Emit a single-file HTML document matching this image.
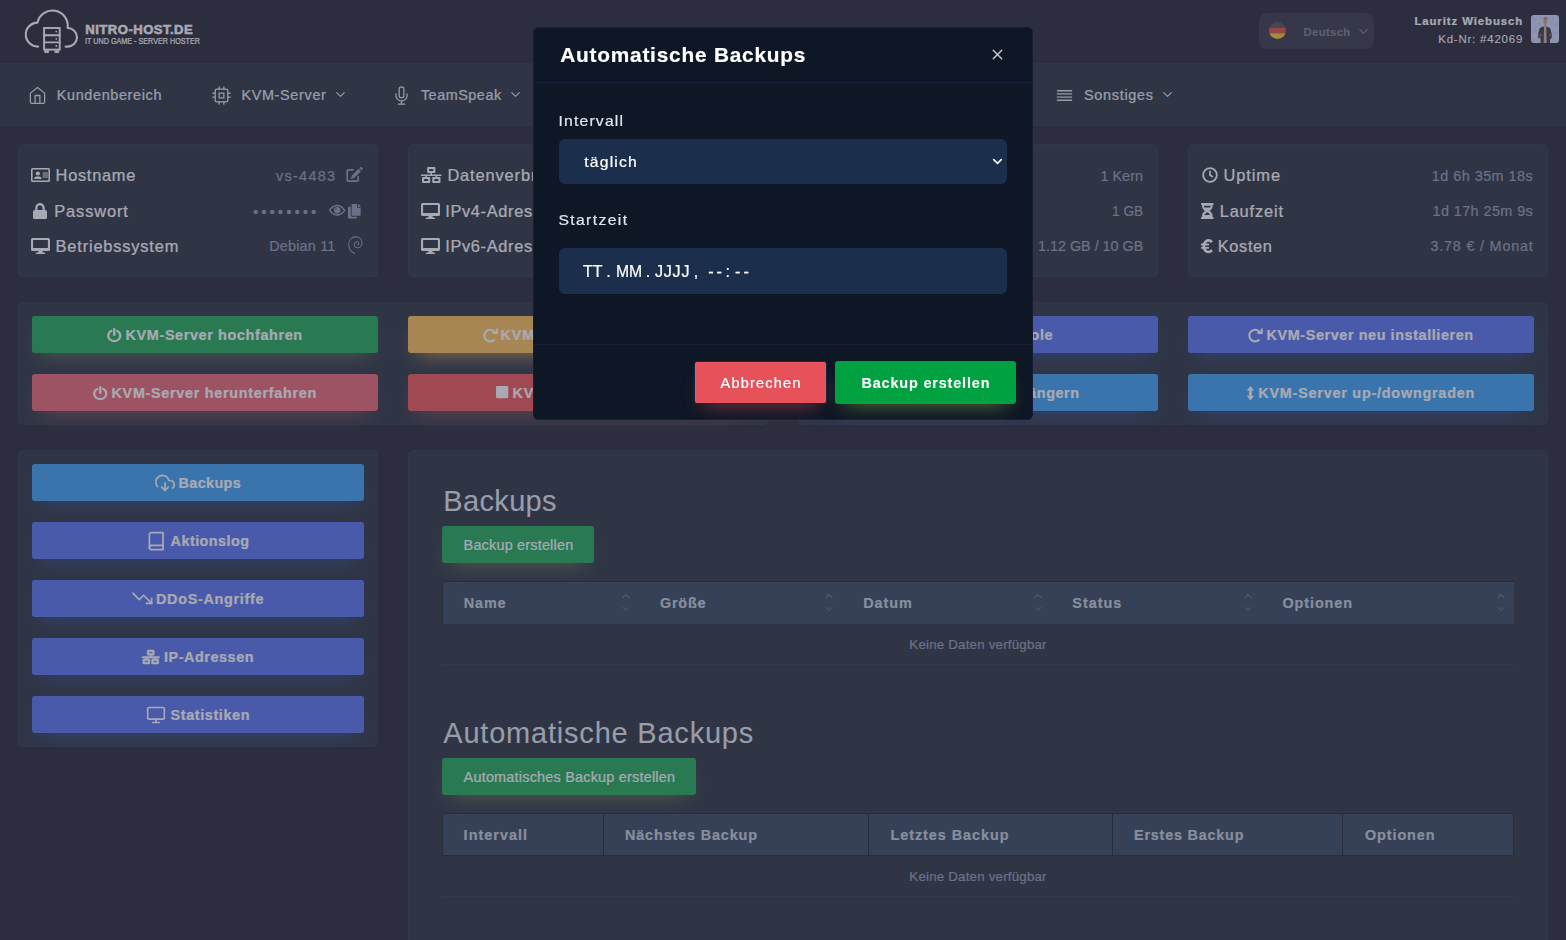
<!DOCTYPE html>
<html lang="de">
<head>
<meta charset="utf-8">
<title>Nitro-Host.de - KVM-Server</title>
<style>
*{box-sizing:border-box}
html,body{margin:0;padding:0}
body{width:1566px;height:940px;overflow:hidden;position:relative;background:#060818;font-family:"Liberation Sans",sans-serif;color:#fff}
.page{position:absolute;left:0;top:0;width:1566px;height:940px;overflow:hidden}
.t{position:absolute;white-space:pre;line-height:20px;margin:0;font-weight:400;transform-origin:0 50%;-webkit-text-stroke:.2px currentColor}
.i{position:absolute;display:block;overflow:visible}
.box{position:absolute}
header{position:absolute;left:0;top:0;width:1566px;height:63px;background:#060818}
nav{position:absolute;left:0;top:63px;width:1566px;height:63px;background:#0e1726}
.card{position:absolute;background:#0e1726;border-radius:6px;box-shadow:inset 0 0 0 1px #121c30}
.btn{position:absolute;border-radius:3px;height:37px}
.b-success{background:#00a141;box-shadow:0 10px 20px -10px rgba(141,191,66,.59)}
.b-danger{background:#ed3f41;box-shadow:0 10px 20px -10px rgba(231,81,90,.59)}
.b-danger2{background:#e95361;box-shadow:0 10px 20px -10px rgba(231,81,90,.59)}
.b-warning{background:#fdb941;box-shadow:0 10px 20px -10px rgba(235,170,63,.95)}
.b-primary{background:#4361ee;box-shadow:0 10px 20px -10px rgba(27,85,226,.59)}
.b-mdanger{background:#e7515a}
.b-info{background:#2196f3;box-shadow:0 10px 20px -10px rgba(27,85,226,.59)}
.th{position:absolute;background:#1b2e4b}
.backdrop{position:absolute;left:0;top:0;width:1566px;height:940px;background:#515365;opacity:.5}
.modal{position:absolute;left:533px;top:27px;width:500px;height:393px;background:#0e1726;border-radius:6px;box-shadow:inset 0 0 0 1px #171c38;will-change:transform}
.modal .t{-webkit-text-stroke:.22px currentColor}
.line{position:absolute;height:1px}
.field{position:absolute;background:#1b2e4b;border-radius:6px}
</style>
</head>
<body>
<div class="page">
<header>
<svg class="i" style="left:20px;top:5px;width:64px;height:54px;color:#fff" viewBox="20 5 64 54" fill="none" stroke="currentColor" stroke-width="2.1" stroke-linecap="round" stroke-linejoin="round">
<path d="M38.1 46.6 A12 12 0 0 1 37.5 22.6 A15.3 15.3 0 0 1 67.6 28 A9.3 9.3 0 0 1 67.800 46.6 H65.6"/>
<rect x="44.1" y="28" width="15.6" height="21.6" stroke-width="1.9" stroke-linejoin="miter"/>
<line x1="44.1" y1="35.2" x2="59.7" y2="35.2" stroke-width="1.9"/><line x1="44.1" y1="42.4" x2="59.7" y2="42.4" stroke-width="1.9"/>
<rect x="45" y="50.6" width="3.6" height="2" fill="currentColor" stroke-width=".8"/><rect x="55.2" y="50.6" width="3.6" height="2" fill="currentColor" stroke-width=".8"/>
<circle cx="56.3" cy="31.6" r=".9" fill="currentColor" stroke="none"/><circle cx="56.3" cy="38.800" r=".9" fill="currentColor" stroke="none"/><circle cx="56.3" cy="46" r=".9" fill="currentColor" stroke="none"/>
</svg>
<span class="t" style="top:19.7px;font-size:13.1px;left:85.3px;letter-spacing:0.47px;font-weight:700;color:#fff;-webkit-text-stroke:.5px #fff;">NITRO-HOST.DE</span>
<span class="t" style="top:31.3px;font-size:8.6px;left:85px;color:#fff;transform:scaleX(0.8382);">IT UND GAME - SERVER HOSTER</span>
<div class="box" style="left:1259px;top:13px;width:115px;height:36px;border-radius:8px;background:#1a1c2d"></div>
<svg class="i" style="left:1269px;top:22px;width:17px;height:17px" viewBox="0 0 17 17"><defs><clipPath id="fc"><circle cx="8.5" cy="8.5" r="8.5"/></clipPath></defs><g clip-path="url(#fc)"><rect width="17" height="5.7" fill="#3a3a3a"/><rect y="5.7" width="17" height="5.6" fill="#e0332e"/><rect y="11.3" width="17" height="5.7" fill="#f5c518"/></g></svg>
<span class="t" style="top:22.2px;font-size:11.4px;left:1303.5px;letter-spacing:0.31px;font-weight:700;color:#6b6d85;-webkit-text-stroke:0;">Deutsch</span>
<svg class="i" style="left:1356px;top:24px;width:15px;height:15px;color:#6b6d85;" viewBox="0 0 24 24" fill="none" stroke="currentColor" stroke-width="1.8" stroke-linecap="round" stroke-linejoin="round"><polyline points="6 9 12 15 18 9"/></svg>
<span class="t" style="top:11px;font-size:11.4px;left:1414.4px;letter-spacing:0.91px;font-weight:700;color:#fff;">Lauritz Wiebusch</span>
<span class="t" style="top:29.3px;font-size:11.5px;left:1438.2px;letter-spacing:0.78px;color:#fff;-webkit-text-stroke:.05px currentColor;">Kd-Nr: #42069</span>
<svg class="i" style="left:1531px;top:15px;width:28px;height:28px;border-radius:3px;overflow:hidden" viewBox="0 0 28 28"><rect width="28" height="28" fill="#c8d6fa"/><g fill="#aebde4" opacity=".55"><circle cx="3" cy="4" r="1.6"/><circle cx="8" cy="9" r="1.3"/><circle cx="4" cy="15" r="1.7"/><circle cx="7" cy="22" r="1.5"/><circle cx="22" cy="3" r="1.5"/><circle cx="25" cy="10" r="1.6"/><circle cx="21" cy="8" r="1.1"/><circle cx="24" cy="18" r="1.6"/><circle cx="22" cy="25" r="1.4"/><circle cx="10" cy="3" r="1.2"/><circle cx="18" cy="2.5" r="1.1"/><circle cx="2.5" cy="25" r="1.4"/></g><g fill="#e4ecff" opacity=".5"><circle cx="5.5" cy="7" r="1"/><circle cx="24" cy="6" r="1"/><circle cx="3" cy="20" r="1.1"/><circle cx="25.5" cy="22" r="1"/><circle cx="9.5" cy="14" r=".9"/><circle cx="20.5" cy="13" r=".9"/></g><path d="M9.6 28V23.2L7.4 23 7.2 19 8.600 13.400Q10.800 11.800 12.800 11.600L16 11.800Q18.700 12.400 19.600 14L20.900 21 20.400 23.400 19 24 19 28z" fill="#271d1b"/><path d="M13 11.800h2.200l.5 16.200h-3z" fill="#b9a9ab"/><path d="M7.400 19.500l3.600-1 .3 2.200-3.700 1.500zM20.800 18l-2.800 1.200.2 2.400 2.900-1z" fill="#6a4a48"/><ellipse cx="14.300" cy="6.300" rx="1.900" ry="2.700" fill="#d88a78"/><ellipse cx="14.500" cy="3.500" rx="2.100" ry="1.400" fill="#d2702c"/><rect x="13.400" y="8.400" width="1.800" height="3.400" fill="#cf8878"/></svg>
</header>
<nav>
<svg class="i" style="left:27.9px;top:22.9px;width:19px;height:19px;color:#e0e6ed;" viewBox="0 0 24 24" fill="none" stroke="currentColor" stroke-width="1.6" stroke-linecap="round" stroke-linejoin="round"><path d="M3 9l9-7 9 7v11a2 2 0 0 1-2 2H5a2 2 0 0 1-2-2z"/><polyline points="9 22 9 12 15 12 15 22"/></svg><span class="t" style="top:22px;font-size:14.4px;left:56.8px;letter-spacing:0.65px;color:#e0e6ed;">Kundenbereich</span>
<svg class="i" style="left:212.1px;top:22.9px;width:19px;height:19px;color:#e0e6ed;" viewBox="0 0 24 24" fill="none" stroke="currentColor" stroke-width="1.6" stroke-linecap="round" stroke-linejoin="round"><rect x="4" y="4" width="16" height="16" rx="2" ry="2"/><rect x="9" y="9" width="6" height="6"/><line x1="9" y1="1" x2="9" y2="4"/><line x1="15" y1="1" x2="15" y2="4"/><line x1="9" y1="20" x2="9" y2="23"/><line x1="15" y1="20" x2="15" y2="23"/><line x1="20" y1="9" x2="23" y2="9"/><line x1="20" y1="14" x2="23" y2="14"/><line x1="1" y1="9" x2="4" y2="9"/><line x1="1" y1="14" x2="4" y2="14"/></svg><span class="t" style="top:22px;font-size:14.4px;left:241.4px;letter-spacing:0.68px;color:#e0e6ed;">KVM-Server</span><svg class="i" style="left:332.9px;top:23.8px;width:15px;height:15px;color:#e0e6ed;" viewBox="0 0 24 24" fill="none" stroke="currentColor" stroke-width="1.8" stroke-linecap="round" stroke-linejoin="round"><polyline points="6 9 12 15 18 9"/></svg>
<svg class="i" style="left:392px;top:22.9px;width:19px;height:19px;color:#e0e6ed;" viewBox="0 0 24 24" fill="none" stroke="currentColor" stroke-width="1.6" stroke-linecap="round" stroke-linejoin="round"><path d="M12 1a3 3 0 0 0-3 3v8a3 3 0 0 0 6 0V4a3 3 0 0 0-3-3z"/><path d="M19 10v2a7 7 0 0 1-14 0v-2"/><line x1="12" y1="19" x2="12" y2="23"/><line x1="8" y1="23" x2="16" y2="23"/></svg><span class="t" style="top:22px;font-size:14.4px;left:420.9px;letter-spacing:0.53px;color:#e0e6ed;">TeamSpeak</span><svg class="i" style="left:508px;top:23.8px;width:15px;height:15px;color:#e0e6ed;" viewBox="0 0 24 24" fill="none" stroke="currentColor" stroke-width="1.8" stroke-linecap="round" stroke-linejoin="round"><polyline points="6 9 12 15 18 9"/></svg>
<svg class="i" style="left:1055px;top:22.9px;width:19px;height:19px;color:#e0e6ed;" viewBox="0 0 24 24" fill="none" stroke="currentColor" stroke-width="1.6" stroke-linecap="round" stroke-linejoin="round"><line x1="21" y1="10" x2="3" y2="10"/><line x1="21" y1="6" x2="3" y2="6"/><line x1="21" y1="14" x2="3" y2="14"/><line x1="21" y1="18" x2="3" y2="18"/></svg><span class="t" style="top:22px;font-size:14.4px;left:1084px;letter-spacing:0.72px;color:#e0e6ed;">Sonstiges</span><svg class="i" style="left:1160px;top:23.8px;width:15px;height:15px;color:#e0e6ed;" viewBox="0 0 24 24" fill="none" stroke="currentColor" stroke-width="1.8" stroke-linecap="round" stroke-linejoin="round"><polyline points="6 9 12 15 18 9"/></svg>
</nav>
<section class="card" style="left:18px;top:144px;width:360px;height:133px">
<svg class="i" style="left:13px;top:23px;width:19px;height:16px;color:#ffffff;" viewBox="0 0 576 512" preserveAspectRatio="none" fill="currentColor"><path fill-rule="evenodd" d="M48 32h480a48 48 0 0 1 48 48v352a48 48 0 0 1-48 48H48a48 48 0 0 1-48-48V80a48 48 0 0 1 48-48zm0 48v352h480V80z"/><circle cx="208" cy="208" r="64"/><path d="M96 384c0-52 28-84 68-84h88c40 0 68 32 68 84z"/><rect x="352" y="176" width="160" height="32" rx="8"/><rect x="352" y="240" width="160" height="32" rx="8"/><rect x="352" y="304" width="160" height="32" rx="8"/></svg>
<span class="t" style="top:21.3px;font-size:16.4px;left:37.6px;letter-spacing:0.71px;color:#ffffff;">Hostname</span>
<span class="t" style="top:22px;font-size:14.4px;left:258px;letter-spacing:1.3px;color:#888ea8;">vs-4483</span>
<svg class="i" style="left:328px;top:23px;width:17px;height:16px;color:#888ea8;" viewBox="0 0 17 16" fill="currentColor"><path fill="none" stroke="currentColor" stroke-width="1.7" stroke-linejoin="round" d="M7.6 2.9H2.6A1.4 1.4 0 0 0 1.2 4.3V12.8A1.4 1.4 0 0 0 2.6 14.2H10.8A1.4 1.4 0 0 0 12.2 12.8V9.2"/><path d="M4.8 11.9L5.6 8.7L12.6 1.8L15 4.2L8 11.1zM13.3 1.1L14.1 .3A1 1 0 0 1 15.5 .3L16.5 1.3A1 1 0 0 1 16.5 2.7L15.7 3.5z"/></svg>
<svg class="i" style="left:14.7px;top:59px;width:14px;height:16px;color:#ffffff;" viewBox="0 0 448 512" fill="currentColor"><path d="M48 224h352a48 48 0 0 1 48 48v192a48 48 0 0 1-48 48H48a48 48 0 0 1-48-48V272a48 48 0 0 1 48-48z"/><path d="M72 232v-80a152 152 0 0 1 304 0v80h-72v-80a80 80 0 0 0-160 0v80z"/></svg>
<span class="t" style="top:57.3px;font-size:16.4px;left:36.3px;letter-spacing:0.87px;color:#ffffff;">Passwort</span>
<span class="t" style="top:57.8px;font-size:15px;left:235px;letter-spacing:3.04px;color:#888ea8;">••••••••</span>
<svg class="i" style="left:310.8px;top:59.4px;width:16.31px;height:14.5px;color:#888ea8;" viewBox="0 0 576 512" fill="currentColor"><path fill-rule="evenodd" d="M288 64C160 64 54 156 4 244a24 24 0 0 0 0 24c50 88 156 180 284 180s234-92 284-180a24 24 0 0 0 0-24C522 156 416 64 288 64zm0 48c100 0 186 66 236 144-50 78-136 144-236 144S102 334 52 256c50-78 136-144 236-144z"/><path fill-rule="evenodd" d="M288 144a112 112 0 1 1 0 224 112 112 0 0 1 0-224zm-20 44a48 48 0 0 0-40 60 48 48 0 0 0 40-60z"/></svg>
<svg class="i" style="left:330.2px;top:59.7px;width:12.69px;height:14.5px;color:#888ea8;" viewBox="0 0 448 512" fill="currentColor"><path d="M320 448v40a24 24 0 0 1-24 24H24a24 24 0 0 1-24-24V120a24 24 0 0 1 24-24h72v296a56 56 0 0 0 56 56z"/><path d="M320 104V0H152a24 24 0 0 0-24 24v368a24 24 0 0 0 24 24h272a24 24 0 0 0 24-24V128H344a24 24 0 0 1-24-24zm121-31L375 7a24 24 0 0 0-17-7h-6v96h96v-6a24 24 0 0 0-7-17z"/></svg>
<svg class="i" style="left:13px;top:94px;width:19px;height:16px;color:#ffffff;" viewBox="0 0 576 512" preserveAspectRatio="none" fill="currentColor"><path fill-rule="evenodd" d="M48 0h480a48 48 0 0 1 48 48v320a48 48 0 0 1-48 48H48a48 48 0 0 1-48-48V48A48 48 0 0 1 48 0zm16 64v256h448V64z"/><path d="M232 416h112l16 48h48a24 24 0 0 1 0 48H168a24 24 0 0 1 0-48h48z"/></svg>
<span class="t" style="top:92.3px;font-size:16.4px;left:37.6px;letter-spacing:0.82px;color:#ffffff;">Betriebssystem</span>
<span class="t" style="top:92px;font-size:14.4px;left:251.3px;letter-spacing:0.18px;color:#888ea8;">Debian 11</span>
<svg class="i" style="left:330px;top:92.2px;width:14.6px;height:18.4px;color:#888ea8;" viewBox="0 0 14.6 18.4" fill="currentColor"><path fill="none" stroke="currentColor" stroke-width="1.05" stroke-linecap="round" d="M6.6 17.6C2.5 15.5 .7 12 .7 8.8C.7 4 3.5 .9 7.7 .9C11.5 .9 14 3.5 14 6.9C14 9.8 12 11.8 9.5 11.8C7.5 11.8 6.3 10.4 6.3 8.7C6.3 7 7.3 5.8 8.8 5.8C10 5.8 10.8 6.6 10.8 7.6C10.8 8.4 10.3 8.9 9.7 8.9"/></svg>
</section>
<section class="card" style="left:408px;top:144px;width:360px;height:133px">
<svg class="i" style="left:13.3px;top:23px;width:20.5px;height:16px;color:#ffffff;" viewBox="0 0 640 512" preserveAspectRatio="none" fill="currentColor"><path fill-rule="evenodd" d="M224 0h192a32 32 0 0 1 32 32v128a32 32 0 0 1-32 32H224a32 32 0 0 1-32-32V32a32 32 0 0 1 32-32zm32 64v64h128V64z"/><path fill-rule="evenodd" d="M64 320h192a32 32 0 0 1 32 32v128a32 32 0 0 1-32 32H64a32 32 0 0 1-32-32V352a32 32 0 0 1 32-32zm32 64v64h128v-64z"/><path fill-rule="evenodd" d="M384 320h192a32 32 0 0 1 32 32v128a32 32 0 0 1-32 32H384a32 32 0 0 1-32-32V352a32 32 0 0 1 32-32zm32 64v64h128v-64z"/><path d="M296 192h48v48h280a16 16 0 0 1 16 16v16a16 16 0 0 1-16 16H504v32h-48v-32H184v32h-48v-32H16a16 16 0 0 1-16-16v-16a16 16 0 0 1 16-16h280z"/></svg>
<span class="t" style="top:21.3px;font-size:16.4px;left:39.4px;letter-spacing:0.88px;color:#ffffff;">Datenverbrauch</span>
<svg class="i" style="left:13.3px;top:59px;width:19px;height:16px;color:#ffffff;" viewBox="0 0 576 512" preserveAspectRatio="none" fill="currentColor"><path fill-rule="evenodd" d="M48 0h480a48 48 0 0 1 48 48v320a48 48 0 0 1-48 48H48a48 48 0 0 1-48-48V48A48 48 0 0 1 48 0zm16 64v256h448V64z"/><path d="M232 416h112l16 48h48a24 24 0 0 1 0 48H168a24 24 0 0 1 0-48h48z"/></svg>
<span class="t" style="top:57.3px;font-size:16.4px;left:37.2px;letter-spacing:0.66px;color:#ffffff;">IPv4-Adresse</span>
<svg class="i" style="left:13.3px;top:94px;width:19px;height:16px;color:#ffffff;" viewBox="0 0 576 512" preserveAspectRatio="none" fill="currentColor"><path fill-rule="evenodd" d="M48 0h480a48 48 0 0 1 48 48v320a48 48 0 0 1-48 48H48a48 48 0 0 1-48-48V48A48 48 0 0 1 48 0zm16 64v256h448V64z"/><path d="M232 416h112l16 48h48a24 24 0 0 1 0 48H168a24 24 0 0 1 0-48h48z"/></svg>
<span class="t" style="top:92.3px;font-size:16.4px;left:37.2px;letter-spacing:0.66px;color:#ffffff;">IPv6-Adresse</span>
</section>
<section class="card" style="left:798px;top:144px;width:360px;height:133px">
<svg class="i" style="left:811px;top:22px;width:18px;height:18px;color:#ffffff;" viewBox="0 0 24 24" fill="none" stroke="currentColor" stroke-width="2" stroke-linecap="round" stroke-linejoin="round"><rect x="4" y="4" width="16" height="16" rx="2" ry="2"/><rect x="9" y="9" width="6" height="6"/><line x1="9" y1="1" x2="9" y2="4"/><line x1="15" y1="1" x2="15" y2="4"/><line x1="9" y1="20" x2="9" y2="23"/><line x1="15" y1="20" x2="15" y2="23"/><line x1="20" y1="9" x2="23" y2="9"/><line x1="20" y1="14" x2="23" y2="14"/><line x1="1" y1="9" x2="4" y2="9"/><line x1="1" y1="14" x2="4" y2="14"/></svg>
<span class="t" style="top:21.3px;font-size:16.4px;left:37px;color:#ffffff;transform:scaleX(0.9246);">CPU</span>
<span class="t" style="top:22px;font-size:14.4px;left:302.4px;letter-spacing:0.04px;color:#888ea8;">1 Kern</span>
<span class="t" style="top:57.3px;font-size:16.4px;left:37px;color:#ffffff;transform:scaleX(0.9880);">RAM</span>
<span class="t" style="top:57px;font-size:14.4px;left:313.8px;color:#888ea8;transform:scaleX(0.9513);">1 GB</span>
<span class="t" style="top:92.3px;font-size:16.4px;left:37px;letter-spacing:0.47px;color:#ffffff;">Speicher</span>
<span class="t" style="top:92px;font-size:14.4px;left:239.7px;color:#888ea8;transform:scaleX(0.9972);">1.12 GB / 10 GB</span>
</section>
<section class="card" style="left:1188px;top:144px;width:360px;height:133px">
<svg class="i" style="left:13.5px;top:23px;width:16px;height:16px;color:#ffffff;" viewBox="0 0 512 512" fill="currentColor"><path fill-rule="evenodd" d="M256 8a248 248 0 1 1 0 496 248 248 0 0 1 0-496zm0 58a190 190 0 1 0 0 380 190 190 0 0 0 0-380z"/><path d="M228 116h56v126l76 56-33 45-99-73z"/></svg>
<span class="t" style="top:21.3px;font-size:16.4px;left:35.5px;letter-spacing:0.92px;color:#ffffff;">Uptime</span>
<span class="t" style="top:22px;font-size:14.4px;left:243.7px;letter-spacing:0.49px;color:#888ea8;">1d 6h 35m 18s</span>
<svg class="i" style="left:13.2px;top:59px;width:12.6px;height:16px;color:#ffffff;" viewBox="0 0 12 16" preserveAspectRatio="none" fill="currentColor"><rect x="0" y="0" width="12" height="1.9" rx=".6"/><rect x="0" y="14.1" width="12" height="1.9" rx=".6"/><path fill-rule="evenodd" d="M1 1.5H11V3.6C11 5.6 9.4 7 8.2 8C9.4 9 11 10.4 11 12.400V14.500H1V12.400C1 10.4 2.6 9 3.8 8C2.6 7 1 5.6 1 3.600ZM2.9 2.700H9.100V3.500C9.1 3.9 9 4.2 8.8 4.500H3.200C3 4.2 2.9 3.9 2.9 3.500ZM6 9.200C7.2 10 8.3 10.9 8.8 12.100H3.200C3.7 10.9 4.8 10 6 9.200Z"/></svg>
<span class="t" style="top:57.3px;font-size:16.4px;left:31.7px;letter-spacing:0.84px;color:#ffffff;">Laufzeit</span>
<span class="t" style="top:57px;font-size:14.4px;left:244.5px;letter-spacing:0.42px;color:#888ea8;">1d 17h 25m 9s</span>
<svg class="i" style="left:12.9px;top:94.9px;width:11.3px;height:14.4px;color:#ffffff;" viewBox="0 0 11.3 14.4" preserveAspectRatio="none" fill="currentColor"><path fill="none" stroke="currentColor" stroke-width="2.7" d="M10.9 3.2A4.7 5.8 0 1 0 10.9 11.2"/><rect x="0" y="4.5" width="8" height="1.9" rx=".3"/><rect x="0" y="7.9" width="8" height="1.9" rx=".3"/></svg>
<span class="t" style="top:92.3px;font-size:16.4px;left:29.7px;letter-spacing:0.65px;color:#ffffff;">Kosten</span>
<span class="t" style="top:92px;font-size:14.4px;left:242.5px;letter-spacing:0.79px;color:#888ea8;">3.78 € / Monat</span>
</section>
<section class="card" style="left:18px;top:302px;width:750px;height:123px">
<a class="btn b-success" style="left:14px;top:14px;width:346px"><svg class="i" style="left:75.3px;top:11.8px;width:14.5px;height:14.2px;color:#fff;" viewBox="0.7 0.15 13.1 14.3" preserveAspectRatio="none" fill="currentColor"><path fill="none" stroke="currentColor" stroke-width="2.1" stroke-linecap="round" d="M7.25 1.2V7.2M9.83 3.04A5.5 5.5 0 1 1 4.67 3.04"/></svg><span class="t" style="top:9px;font-size:14.4px;left:93.6px;letter-spacing:0.63px;font-weight:700;color:#fff;">KVM-Server hochfahren</span></a>
<a class="btn b-danger2" style="left:14px;top:72px;width:346px"><svg class="i" style="left:61.2px;top:11.8px;width:14.5px;height:14.2px;color:#fff;" viewBox="0.7 0.15 13.1 14.3" preserveAspectRatio="none" fill="currentColor"><path fill="none" stroke="currentColor" stroke-width="2.1" stroke-linecap="round" d="M7.25 1.2V7.2M9.83 3.04A5.5 5.5 0 1 1 4.67 3.04"/></svg><span class="t" style="top:9px;font-size:14.4px;left:79.5px;letter-spacing:0.7px;font-weight:700;color:#fff;">KVM-Server herunterfahren</span></a>
<a class="btn b-warning" style="left:390px;top:14px;width:346px"><svg class="i" style="left:74.7px;top:11.7px;width:14.8px;height:14.4px;color:#fff;" viewBox="0 0 14.8 14.4" preserveAspectRatio="none" fill="currentColor"><path fill="none" stroke="currentColor" stroke-width="2.05" d="M11.6 3.9A5.8 5.8 0 1 0 11.4 11.5"/><path fill="none" stroke="currentColor" stroke-width="1.9" stroke-linejoin="round" d="M13.8 .4V5H9.4"/><path d="M14.7 .3V5.9H9.1z" opacity=".55"/></svg><span class="t" style="top:9px;font-size:14.4px;left:92.5px;letter-spacing:0.85px;font-weight:700;color:#fff;">KVM-Server neu starten</span></a>
<a class="btn b-danger" style="left:390px;top:72px;width:346px"><svg class="i" style="left:87.7px;top:11.2px;width:12.25px;height:14px;color:#fff;" viewBox="0 0 448 512" fill="currentColor"><rect x="0" y="32" width="448" height="448" rx="48"/></svg><span class="t" style="top:9px;font-size:14.4px;left:104.5px;letter-spacing:0.79px;font-weight:700;color:#fff;">KVM-Server stoppen</span></a>
</section>
<section class="card" style="left:798px;top:302px;width:750px;height:123px">
<a class="btn b-primary" style="left:14px;top:14px;width:346px"><svg class="i" style="left:121px;top:10.5px;width:16px;height:16px;color:#fff;" viewBox="0 0 24 24" fill="none" stroke="currentColor" stroke-width="2" stroke-linecap="round" stroke-linejoin="round"><rect x="2" y="3" width="20" height="14" rx="2" ry="2"/><line x1="8" y1="21" x2="16" y2="21"/><line x1="12" y1="17" x2="12" y2="21"/></svg><span class="t" style="top:9px;font-size:14.4px;left:143px;letter-spacing:0.55px;font-weight:700;color:#fff;">VNC-Konsole</span></a>
<a class="btn b-info" style="left:14px;top:72px;width:346px"><svg class="i" style="left:79px;top:12px;width:14px;height:14px;color:#fff;" viewBox="0 0 512 512" fill="currentColor"><path fill-rule="evenodd" d="M256 8a248 248 0 1 1 0 496 248 248 0 0 1 0-496zm0 58a190 190 0 1 0 0 380 190 190 0 0 0 0-380z"/><path d="M228 116h56v126l76 56-33 45-99-73z"/></svg><span class="t" style="top:9px;font-size:14.4px;left:97px;letter-spacing:0.54px;font-weight:700;color:#fff;">KVM-Server verlängern</span></a>
<a class="btn b-primary" style="left:390px;top:14px;width:346px"><svg class="i" style="left:60.4px;top:11.7px;width:14.8px;height:14.4px;color:#fff;" viewBox="0 0 14.8 14.4" preserveAspectRatio="none" fill="currentColor"><path fill="none" stroke="currentColor" stroke-width="2.05" d="M11.6 3.9A5.8 5.8 0 1 0 11.4 11.5"/><path fill="none" stroke="currentColor" stroke-width="1.9" stroke-linejoin="round" d="M13.8 .4V5H9.4"/><path d="M14.7 .3V5.9H9.1z" opacity=".55"/></svg><span class="t" style="top:9px;font-size:14.4px;left:78.6px;letter-spacing:0.59px;font-weight:700;color:#fff;">KVM-Server neu installieren</span></a>
<a class="btn b-info" style="left:390px;top:72px;width:346px"><svg class="i" style="left:59.2px;top:11.6px;width:6.9px;height:14.4px;color:#fff;" viewBox="0 0 6.9 14.4" preserveAspectRatio="none" fill="currentColor"><path stroke="currentColor" stroke-width=".5" stroke-linejoin="round" d="M3.45 .2L6.7 4.5H4.55V9.9H6.7L3.45 14.2L.2 9.9H2.35V4.5H.2Z"/></svg><span class="t" style="top:9px;font-size:14.4px;left:70.3px;letter-spacing:0.77px;font-weight:700;color:#fff;">KVM-Server up-/downgraden</span></a>
</section>
<aside class="card" style="left:18px;top:449.7px;width:360px;height:297.3px">
<a class="btn b-info" style="left:14px;top:14.3px;width:332px"><svg class="i" style="left:123px;top:9.4px;width:20px;height:20px;color:#fff;" viewBox="0 0 24 24" fill="none" stroke="currentColor" stroke-width="2" stroke-linecap="round" stroke-linejoin="round"><polyline points="8 17 12 21 16 17"/><line x1="12" y1="12" x2="12" y2="21"/><path d="M20.88 18.09A5 5 0 0 0 18 9h-1.26A8 8 0 1 0 3 16.29"/></svg><span class="t" style="top:9px;font-size:14.4px;left:146.6px;letter-spacing:0.35px;font-weight:700;color:#fff;">Backups</span></a>
<a class="btn b-primary" style="left:14px;top:72.3px;width:332px"><svg class="i" style="left:114.3px;top:8.6px;width:20.4px;height:20.4px;color:#fff;" viewBox="0 0 24 24" fill="none" stroke="currentColor" stroke-width="2" stroke-linecap="round" stroke-linejoin="round"><path d="M4 19.5A2.5 2.5 0 0 1 6.5 17H20"/><path d="M6.5 2H20v20H6.5A2.5 2.5 0 0 1 4 19.5v-15A2.5 2.5 0 0 1 6.5 2z"/></svg><span class="t" style="top:9px;font-size:14.4px;left:138.6px;letter-spacing:0.45px;font-weight:700;color:#fff;">Aktionslog</span></a>
<a class="btn b-primary" style="left:14px;top:130.3px;width:332px"><svg class="i" style="left:99.8px;top:8.4px;width:20.5px;height:20.5px;color:#fff;" viewBox="0 0 24 24" fill="none" stroke="currentColor" stroke-width="2" stroke-linecap="round" stroke-linejoin="round"><polyline points="23 18 13.5 8.5 8.5 13.5 1 6"/><polyline points="17 18 23 18 23 12"/></svg><span class="t" style="top:9px;font-size:14.4px;left:124px;letter-spacing:0.7px;font-weight:700;color:#fff;">DDoS-Angriffe</span></a>
<a class="btn b-primary" style="left:14px;top:188.3px;width:332px"><svg class="i" style="left:110.4px;top:12px;width:17.5px;height:14px;color:#fff;stroke:currentColor;stroke-width:18px;" viewBox="0 0 640 512" fill="currentColor"><path fill-rule="evenodd" d="M224 0h192a32 32 0 0 1 32 32v128a32 32 0 0 1-32 32H224a32 32 0 0 1-32-32V32a32 32 0 0 1 32-32zm32 64v64h128V64z"/><path fill-rule="evenodd" d="M64 320h192a32 32 0 0 1 32 32v128a32 32 0 0 1-32 32H64a32 32 0 0 1-32-32V352a32 32 0 0 1 32-32zm32 64v64h128v-64z"/><path fill-rule="evenodd" d="M384 320h192a32 32 0 0 1 32 32v128a32 32 0 0 1-32 32H384a32 32 0 0 1-32-32V352a32 32 0 0 1 32-32zm32 64v64h128v-64z"/><path d="M296 192h48v48h280a16 16 0 0 1 16 16v16a16 16 0 0 1-16 16H504v32h-48v-32H184v32h-48v-32H16a16 16 0 0 1-16-16v-16a16 16 0 0 1 16-16h280z"/></svg><span class="t" style="top:9px;font-size:14.4px;left:132px;letter-spacing:0.55px;font-weight:700;color:#fff;">IP-Adressen</span></a>
<a class="btn b-primary" style="left:14px;top:246.3px;width:332px"><svg class="i" style="left:114.3px;top:8.8px;width:20px;height:20px;color:#fff;" viewBox="0 0 24 24" fill="none" stroke="currentColor" stroke-width="2" stroke-linecap="round" stroke-linejoin="round"><rect x="2" y="3" width="20" height="14" rx="2" ry="2"/><line x1="8" y1="21" x2="16" y2="21"/><line x1="12" y1="17" x2="12" y2="21"/></svg><span class="t" style="top:9px;font-size:14.4px;left:138.5px;letter-spacing:0.62px;font-weight:700;color:#fff;">Statistiken</span></a>
</aside>
<main class="card" style="left:408px;top:449.7px;width:1140px;height:520px;border-radius:6px 6px 0 0">
<h2 class="t" style="top:41.8px;font-size:29px;left:35.3px;letter-spacing:0.34px;color:#e0e6ed;-webkit-text-stroke:0;">Backups</h2>
<a class="btn b-success" style="left:34px;top:76.3px;width:152px"><span class="t" style="top:9px;font-size:14.4px;left:21.6px;letter-spacing:0.21px;color:#fff;">Backup erstellen</span></a>
<div class="th" style="left:34px;top:131.3px;width:1072px;height:43px;border-top:1px solid #04050c;border-left:1px solid #04050c"><span class="t" style="top:11px;font-size:14.4px;left:20.8px;letter-spacing:0.87px;font-weight:700;color:#bfc9d4;">Name</span><span class="t" style="top:11px;font-size:14.4px;left:217px;letter-spacing:0.78px;font-weight:700;color:#bfc9d4;">Größe</span><span class="t" style="top:11px;font-size:14.4px;left:420.3px;letter-spacing:0.93px;font-weight:700;color:#bfc9d4;">Datum</span><span class="t" style="top:11px;font-size:14.4px;left:629.3px;letter-spacing:1px;font-weight:700;color:#bfc9d4;">Status</span><span class="t" style="top:11px;font-size:14.4px;left:839.5px;letter-spacing:0.91px;font-weight:700;color:#bfc9d4;">Optionen</span><svg class="i" style="left:177px;top:8.5px;width:12px;height:12px;color:#8a95b3;" viewBox="0 0 24 24" fill="none" stroke="currentColor" stroke-width="1.7" stroke-linecap="round" stroke-linejoin="round"><polyline points="18 15 12 9 6 15"/></svg><svg class="i" style="left:177px;top:21.5px;width:12px;height:12px;color:#66728f;" viewBox="0 0 24 24" fill="none" stroke="currentColor" stroke-width="1.7" stroke-linecap="round" stroke-linejoin="round"><polyline points="6 9 12 15 18 9"/></svg><svg class="i" style="left:380px;top:8.5px;width:12px;height:12px;color:#8a95b3;" viewBox="0 0 24 24" fill="none" stroke="currentColor" stroke-width="1.7" stroke-linecap="round" stroke-linejoin="round"><polyline points="18 15 12 9 6 15"/></svg><svg class="i" style="left:380px;top:21.5px;width:12px;height:12px;color:#66728f;" viewBox="0 0 24 24" fill="none" stroke="currentColor" stroke-width="1.7" stroke-linecap="round" stroke-linejoin="round"><polyline points="6 9 12 15 18 9"/></svg><svg class="i" style="left:589px;top:8.5px;width:12px;height:12px;color:#8a95b3;" viewBox="0 0 24 24" fill="none" stroke="currentColor" stroke-width="1.7" stroke-linecap="round" stroke-linejoin="round"><polyline points="18 15 12 9 6 15"/></svg><svg class="i" style="left:589px;top:21.5px;width:12px;height:12px;color:#66728f;" viewBox="0 0 24 24" fill="none" stroke="currentColor" stroke-width="1.7" stroke-linecap="round" stroke-linejoin="round"><polyline points="6 9 12 15 18 9"/></svg><svg class="i" style="left:799px;top:8.5px;width:12px;height:12px;color:#8a95b3;" viewBox="0 0 24 24" fill="none" stroke="currentColor" stroke-width="1.7" stroke-linecap="round" stroke-linejoin="round"><polyline points="18 15 12 9 6 15"/></svg><svg class="i" style="left:799px;top:21.5px;width:12px;height:12px;color:#66728f;" viewBox="0 0 24 24" fill="none" stroke="currentColor" stroke-width="1.7" stroke-linecap="round" stroke-linejoin="round"><polyline points="6 9 12 15 18 9"/></svg><svg class="i" style="left:1052px;top:8.5px;width:12px;height:12px;color:#8a95b3;" viewBox="0 0 24 24" fill="none" stroke="currentColor" stroke-width="1.7" stroke-linecap="round" stroke-linejoin="round"><polyline points="18 15 12 9 6 15"/></svg><svg class="i" style="left:1052px;top:21.5px;width:12px;height:12px;color:#66728f;" viewBox="0 0 24 24" fill="none" stroke="currentColor" stroke-width="1.7" stroke-linecap="round" stroke-linejoin="round"><polyline points="6 9 12 15 18 9"/></svg></div>
<span class="t" style="top:185.7px;font-size:13.3px;left:501.3px;letter-spacing:0.21px;color:#888ea8;">Keine Daten verfügbar</span>
<i class="line" style="left:34px;top:214.3px;width:1072px;background:#191e3a"></i>
<h2 class="t" style="top:273.8px;font-size:29px;left:35.3px;letter-spacing:0.79px;color:#e0e6ed;-webkit-text-stroke:0;">Automatische Backups</h2>
<a class="btn b-success" style="left:34px;top:308.3px;width:254px"><span class="t" style="top:9px;font-size:14.4px;left:21.6px;letter-spacing:0.23px;color:#fff;">Automatisches Backup erstellen</span></a>
<div class="th" style="left:34px;top:363.3px;width:1072px;height:43px;border-right:1px solid #04050c;border-bottom:1px solid #04050c;border-top:1px solid #04050c;border-left:1px solid #04050c"><span class="t" style="top:11px;font-size:14.4px;left:20.6px;letter-spacing:1.04px;font-weight:700;color:#bfc9d4;">Intervall</span><span class="t" style="top:11px;font-size:14.4px;left:182px;letter-spacing:0.86px;font-weight:700;color:#bfc9d4;">Nächstes Backup</span><span class="t" style="top:11px;font-size:14.4px;left:447.5px;letter-spacing:0.96px;font-weight:700;color:#bfc9d4;">Letztes Backup</span><span class="t" style="top:11px;font-size:14.4px;left:691px;letter-spacing:0.79px;font-weight:700;color:#bfc9d4;">Erstes Backup</span><span class="t" style="top:11px;font-size:14.4px;left:922px;letter-spacing:0.91px;font-weight:700;color:#bfc9d4;">Optionen</span><i class="line" style="left:160px;top:0;width:1px;height:42px;background:#04050c"></i><i class="line" style="left:425px;top:0;width:1px;height:42px;background:#04050c"></i><i class="line" style="left:669px;top:0;width:1px;height:42px;background:#04050c"></i><i class="line" style="left:899px;top:0;width:1px;height:42px;background:#04050c"></i></div>
<span class="t" style="top:417.7px;font-size:13.3px;left:501.3px;letter-spacing:0.21px;color:#888ea8;">Keine Daten verfügbar</span>
<i class="line" style="left:34px;top:446.8px;width:1072px;background:#191e3a"></i>
</main>
<div class="backdrop"></div>
<div class="modal" role="dialog">
<h5 class="t" style="top:17.8px;font-size:20.8px;left:27.2px;letter-spacing:0.8px;font-weight:700;color:#fff;">Automatische Backups</h5>
<svg class="i" style="left:455.9px;top:18.5px;width:17px;height:17px;color:#bfc9d4;" viewBox="0 0 24 24" fill="none" stroke="currentColor" stroke-width="2" stroke-linecap="round" stroke-linejoin="round"><line x1="18" y1="6" x2="6" y2="18"/><line x1="6" y1="6" x2="18" y2="18"/></svg>
<i class="line" style="left:0;top:55px;width:500px;background:#191e3a"></i>
<label class="t" style="top:84px;font-size:15.7px;left:25.4px;letter-spacing:1.21px;color:#e0e6ed;transform:scaleY(.93);">Intervall</label>
<div class="field" style="left:25.7px;top:112px;width:448.3px;height:45px"><span class="t" style="top:13px;font-size:15.7px;left:25.6px;letter-spacing:1.19px;color:#fff;transform:scaleY(.93);">täglich</span><svg class="i" style="left:430.9px;top:15px;width:15px;height:15px;color:#fff;" viewBox="0 0 24 24" fill="none" stroke="currentColor" stroke-width="2.6" stroke-linecap="round" stroke-linejoin="round"><polyline points="6 9 12 15 18 9"/></svg></div>
<label class="t" style="top:183px;font-size:15.7px;left:25.4px;letter-spacing:1.39px;color:#e0e6ed;transform:scaleY(.93);">Startzeit</label>
<div class="field" style="left:25.7px;top:221px;width:448.3px;height:46px"><span class="t" style="top:13.4px;font-size:16.2px;left:24.5px;color:#fff;transform:scaleX(0.9807);">TT</span><span class="t" style="top:13.4px;font-size:16.2px;left:47.6px;color:#fff;">.</span><span class="t" style="top:13.4px;font-size:16.2px;left:57.3px;color:#fff;transform:scaleX(0.9715);">MM</span><span class="t" style="top:13.4px;font-size:16.2px;left:87.1px;color:#fff;">.</span><span class="t" style="top:13.4px;font-size:16.2px;left:96.3px;letter-spacing:0.71px;color:#fff;">JJJJ</span><span class="t" style="top:13.4px;font-size:16.2px;left:135px;color:#fff;">,</span><span class="t" style="top:13.4px;font-size:16.2px;left:149.6px;letter-spacing:2.92px;color:#fff;">--</span><span class="t" style="top:13.4px;font-size:16.2px;left:166.8px;color:#fff;">:</span><span class="t" style="top:13.4px;font-size:16.2px;left:176.4px;letter-spacing:3.12px;color:#fff;">--</span></div>
<i class="line" style="left:0;top:317px;width:500px;background:#191e3a"></i>
<a class="btn b-mdanger" style="left:161px;top:334px;width:133px;height:43px;border:1px solid #0b2a48;box-shadow:inset 0 0 0 1px #ee545d,0 10px 20px -10px rgba(231,81,90,.59)"><span class="t" style="top:11px;font-size:14.5px;left:25.5px;letter-spacing:1.23px;color:#fff;">Abbrechen</span></a>
<a class="btn b-success" style="left:302px;top:334px;width:181px;height:43px"><span class="t" style="top:12px;font-size:14.4px;left:26.5px;letter-spacing:0.85px;font-weight:700;color:#fff;-webkit-text-stroke:.1px #fff;">Backup erstellen</span></a>
</div>
</div>
</body>
</html>
